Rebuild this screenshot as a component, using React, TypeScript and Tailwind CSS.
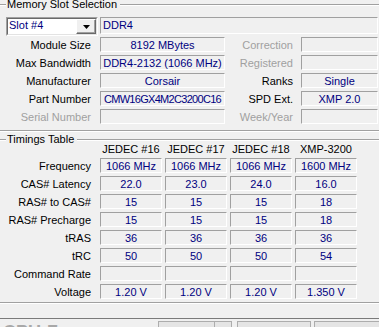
import React from "react";

const sunken =
  "border border-t-[#a0a0a0] border-l-[#a0a0a0] border-b-white border-r-white";

function Box({
  children,
  w,
  align = "center",
  extra = "",
}: {
  children?: React.ReactNode;
  w: string;
  align?: "center" | "left";
  extra?: string;
}) {
  return (
    <div
      className={`${w} h-[15px] ${sunken} pt-[1px] leading-[13px] text-[#000080] whitespace-nowrap overflow-visible ${
        align === "center" ? "text-center" : "text-left pl-[2px]"
      } ${extra}`}
    >
      {children}
    </div>
  );
}

function GroupBox({
  title,
  className,
  children,
}: {
  title: string;
  className: string;
  children?: React.ReactNode;
}) {
  return (
    <div
      className={`relative border border-[#a0a0a0] shadow-[inset_1px_1px_0_#ffffff,1px_1px_0_#ffffff] ${className}`}
    >
      <div className="absolute left-[7px] top-[-7px] bg-[#f0f0f0] pl-[1px] pr-[3px] leading-[13px] whitespace-nowrap">
        {title}
      </div>
      {children}
    </div>
  );
}

const slotRows: {
  label: string;
  labelDisabled?: boolean;
  value: string;
  valueExtra?: string;
  right: string;
  rightDisabled?: boolean;
  rightValue: string;
}[] = [
  { label: "Module Size", value: "8192 MBytes", right: "Correction", rightDisabled: true, rightValue: "" },
  { label: "Max Bandwidth", value: "DDR4-2132 (1066 MHz)", right: "Registered", rightDisabled: true, rightValue: "" },
  { label: "Manufacturer", value: "Corsair", right: "Ranks", rightValue: "Single" },
  { label: "Part Number", value: "CMW16GX4M2C3200C16", valueExtra: "tracking-[-0.7px]", right: "SPD Ext.", rightValue: "XMP 2.0" },
  { label: "Serial Number", labelDisabled: true, value: "", right: "Week/Year", rightDisabled: true, rightValue: "" },
];

const headers = ["JEDEC #16", "JEDEC #17", "JEDEC #18", "XMP-3200"];
const timings: { label: string; values: string[] }[] = [
  { label: "Frequency", values: ["1066 MHz", "1066 MHz", "1066 MHz", "1600 MHz"] },
  { label: "CAS# Latency", values: ["22.0", "23.0", "24.0", "16.0"] },
  { label: "RAS# to CAS#", values: ["15", "15", "15", "18"] },
  { label: "RAS# Precharge", values: ["15", "15", "15", "18"] },
  { label: "tRAS", values: ["36", "36", "36", "36"] },
  { label: "tRC", values: ["50", "50", "50", "54"] },
  { label: "Command Rate", values: ["", "", "", ""] },
  { label: "Voltage", values: ["1.20 V", "1.20 V", "1.20 V", "1.350 V"] },
];

export default function App() {
  return (
    <div className="w-[379px] h-[327px] overflow-hidden bg-[#f0f0f0] text-black text-[11px] leading-[13px] font-['Liberation_Sans',Arial,sans-serif] flex flex-col">
      {/* Memory Slot Selection */}
      <GroupBox title="Memory Slot Selection" className="mt-[4px] ml-[-2px] w-[400px] h-[127px] shrink-0">
        <div className="pl-[1px] pt-[12px] flex flex-col">
          <div className="flex items-start">
            <div className={`ml-[6px] w-[92px] h-[19px] bg-white ${sunken}`}>
              <div className="h-full flex border border-t-[#696969] border-l-[#696969] border-b-[#e3e3e3] border-r-[#e3e3e3]">
                <div className="flex-1 pl-[1px] leading-[13px] text-[#000080]">Slot #4</div>
                <div className="w-[20px] h-full bg-[#f0f0f0] border border-t-white border-l-white border-b-[#696969] border-r-[#696969] shadow-[inset_-1px_-1px_0_#a0a0a0] flex items-center justify-center">
                  <svg width="7" height="4" viewBox="0 0 7 4">
                    <polygon points="0,0 7,0 3.5,4" fill="#000" />
                  </svg>
                </div>
              </div>
            </div>
            <div className={`ml-[2px] w-[278px] h-[17px] ${sunken} pt-[1px] pl-[2px] leading-[13px] text-[#000080]`}>
              DDR4
            </div>
          </div>
          <div className="mt-[1px] flex flex-col gap-[3px]">
            {slotRows.map((r) => (
              <div key={r.label} className="flex items-start h-[15px]">
                <div
                  className={`w-[91px] text-right pt-[2px] leading-[13px] whitespace-nowrap ${
                    r.labelDisabled ? "text-[#a0a0a0]" : "text-black"
                  }`}
                >
                  {r.label}
                </div>
                <div className="ml-[9px]">
                  <Box w="w-[125px]" extra={r.valueExtra ?? ""}>
                    {r.value}
                  </Box>
                </div>
                <div
                  className={`w-[68px] text-right pt-[2px] leading-[13px] whitespace-nowrap ${
                    r.rightDisabled ? "text-[#a0a0a0]" : "text-black"
                  }`}
                >
                  {r.right}
                </div>
                <div className="ml-[8px]">
                  <Box w="w-[77px]">{r.rightValue}</Box>
                </div>
              </div>
            ))}
          </div>
        </div>
      </GroupBox>

      {/* Timings Table */}
      <GroupBox title="Timings Table" className="mt-[8px] ml-[-2px] w-[400px] h-[164px] shrink-0">
        <div className="pl-[1px] pt-[3px] flex flex-col">
          <div className="flex h-[13px]">
            <div className="w-[91px]" />
            <div className="ml-[9px] grid grid-cols-[62px_62px_62px_62px] gap-x-[3px]">
              {headers.map((h) => (
                <div key={h} className="text-center leading-[13px] whitespace-nowrap">
                  {h}
                </div>
              ))}
            </div>
          </div>
          <div className="mt-[2px] flex flex-col gap-[3px]">
            {timings.map((t) => (
              <div key={t.label} className="flex items-start h-[15px]">
                <div className="w-[91px] text-right pt-[2px] leading-[13px] whitespace-nowrap">
                  {t.label}
                </div>
                <div className="ml-[9px] grid grid-cols-[62px_62px_62px_62px] gap-x-[3px]">
                  {t.values.map((v, i) => (
                    <Box key={i} w="w-[62px]">
                      {v}
                    </Box>
                  ))}
                </div>
              </div>
            ))}
          </div>
        </div>
      </GroupBox>

      {/* bottom tab edge */}
      <div className="mt-[15px] h-[1px] bg-[#7a7a7a] shrink-0" />

      {/* bottom bar */}
      <div className="flex items-start shrink-0">
        <div className="w-[158px] shrink-0 pl-[3px] mt-[4px] text-[18px] leading-[18px] font-bold text-[#a8a8a8] whitespace-nowrap">
          CPU-Z
        </div>
        <div className="mt-[2px] w-[74px] h-[20px] shrink-0 border border-[#adadad] bg-[#e5e5e5] flex">
          <div className="w-[56px] h-full border-r border-[#adadad]" />
        </div>
        <div className="mt-[2px] ml-[5px] w-[74px] h-[20px] shrink-0 border border-[#adadad] bg-[#e5e5e5]" />
        <div className="mt-[2px] ml-[3px] w-[70px] h-[20px] shrink-0 border border-[#adadad] bg-[#e5e5e5]" />
      </div>
    </div>
  );
}
